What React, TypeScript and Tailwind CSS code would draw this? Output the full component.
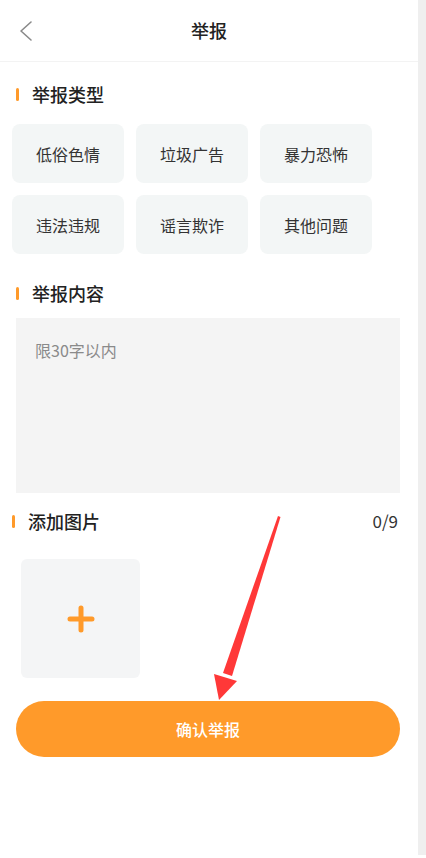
import React from 'react';

const types = ['低俗色情', '垃圾广告', '暴力恐怖', '违法违规', '谣言欺诈', '其他问题'];

const SectionTitle: React.FC<{ text: string; className?: string }> = ({ text, className = '' }) => (
  <div className={`flex items-center h-6 ${className}`}>
    <span className="w-[3px] h-[13px] bg-[#ff9a2a] rounded-sm" />
    <span className="ml-[13px] text-[18px] font-medium text-[#222]">{text}</span>
  </div>
);

export default function App() {
  return (
    <div
      className="relative flex w-[426px] h-[858px] bg-white overflow-hidden"
      style={{ fontFamily: '"Noto Sans CJK SC", "Noto Sans", sans-serif' }}
    >
      <div className="w-[418px] flex flex-col">
        <div className="relative h-[62px] flex items-center justify-center border-b border-[#f3f3f3]">
          <svg className="absolute left-[18px] top-[20px]" width="16" height="22" viewBox="0 0 16 22" fill="none">
            <path d="M13 2 L3 11 L13 20" stroke="#8a8a8a" strokeWidth="1.6" strokeLinecap="round" strokeLinejoin="round" />
          </svg>
          <span className="text-[18px] font-medium text-[#222]">举报</span>
        </div>

        <SectionTitle text="举报类型" className="mt-[20px] pl-4" />

        <div className="mt-[18px] ml-3 grid grid-cols-[112px_112px_112px] gap-x-3 gap-y-3">
          {types.map((t) => (
            <div key={t} className="h-[59px] rounded-lg bg-[#f3f6f6] flex items-center justify-center text-[16px] text-[#333]">
              {t}
            </div>
          ))}
        </div>

        <SectionTitle text="举报内容" className="mt-[27px] pl-4" />

        <div className="mt-[13px] ml-4 mr-[18px] h-[175px] bg-[#f4f4f4] px-[19px] pt-[20px]">
          <span className="text-[16px] text-[#8a8a8a]">限30字以内</span>
        </div>

        <div className="mt-4 h-6 flex items-center justify-between pl-3 pr-5">
          <SectionTitle text="添加图片" />
          <span className="text-[17px] leading-6 text-[#333]">0/9</span>
        </div>

        <div className="mt-[26px] ml-[21px] w-[119px] h-[119px] rounded-md bg-[#f4f5f6] flex items-center justify-center">
          <svg width="30" height="30" viewBox="0 0 30 30">
            <path d="M15 4 V26 M4 15 H26" stroke="#ff9a2a" strokeWidth="5" strokeLinecap="round" />
          </svg>
        </div>

        <button className="mt-[23px] ml-4 mr-[18px] h-[56px] rounded-full bg-[#ff9a2a] text-white text-[16px] font-medium">
          确认举报
        </button>
      </div>
      <div className="w-2 h-[855px] bg-[#efefef]" />

      <svg className="absolute left-0 top-0 pointer-events-none" width="426" height="858" viewBox="0 0 426 858">
        <polygon points="278,516 280.5,517 232,676 223,673" fill="#ff3838" />
        <polygon points="214,674 237,681 219,700" fill="#ff3838" />
      </svg>
    </div>
  );
}
